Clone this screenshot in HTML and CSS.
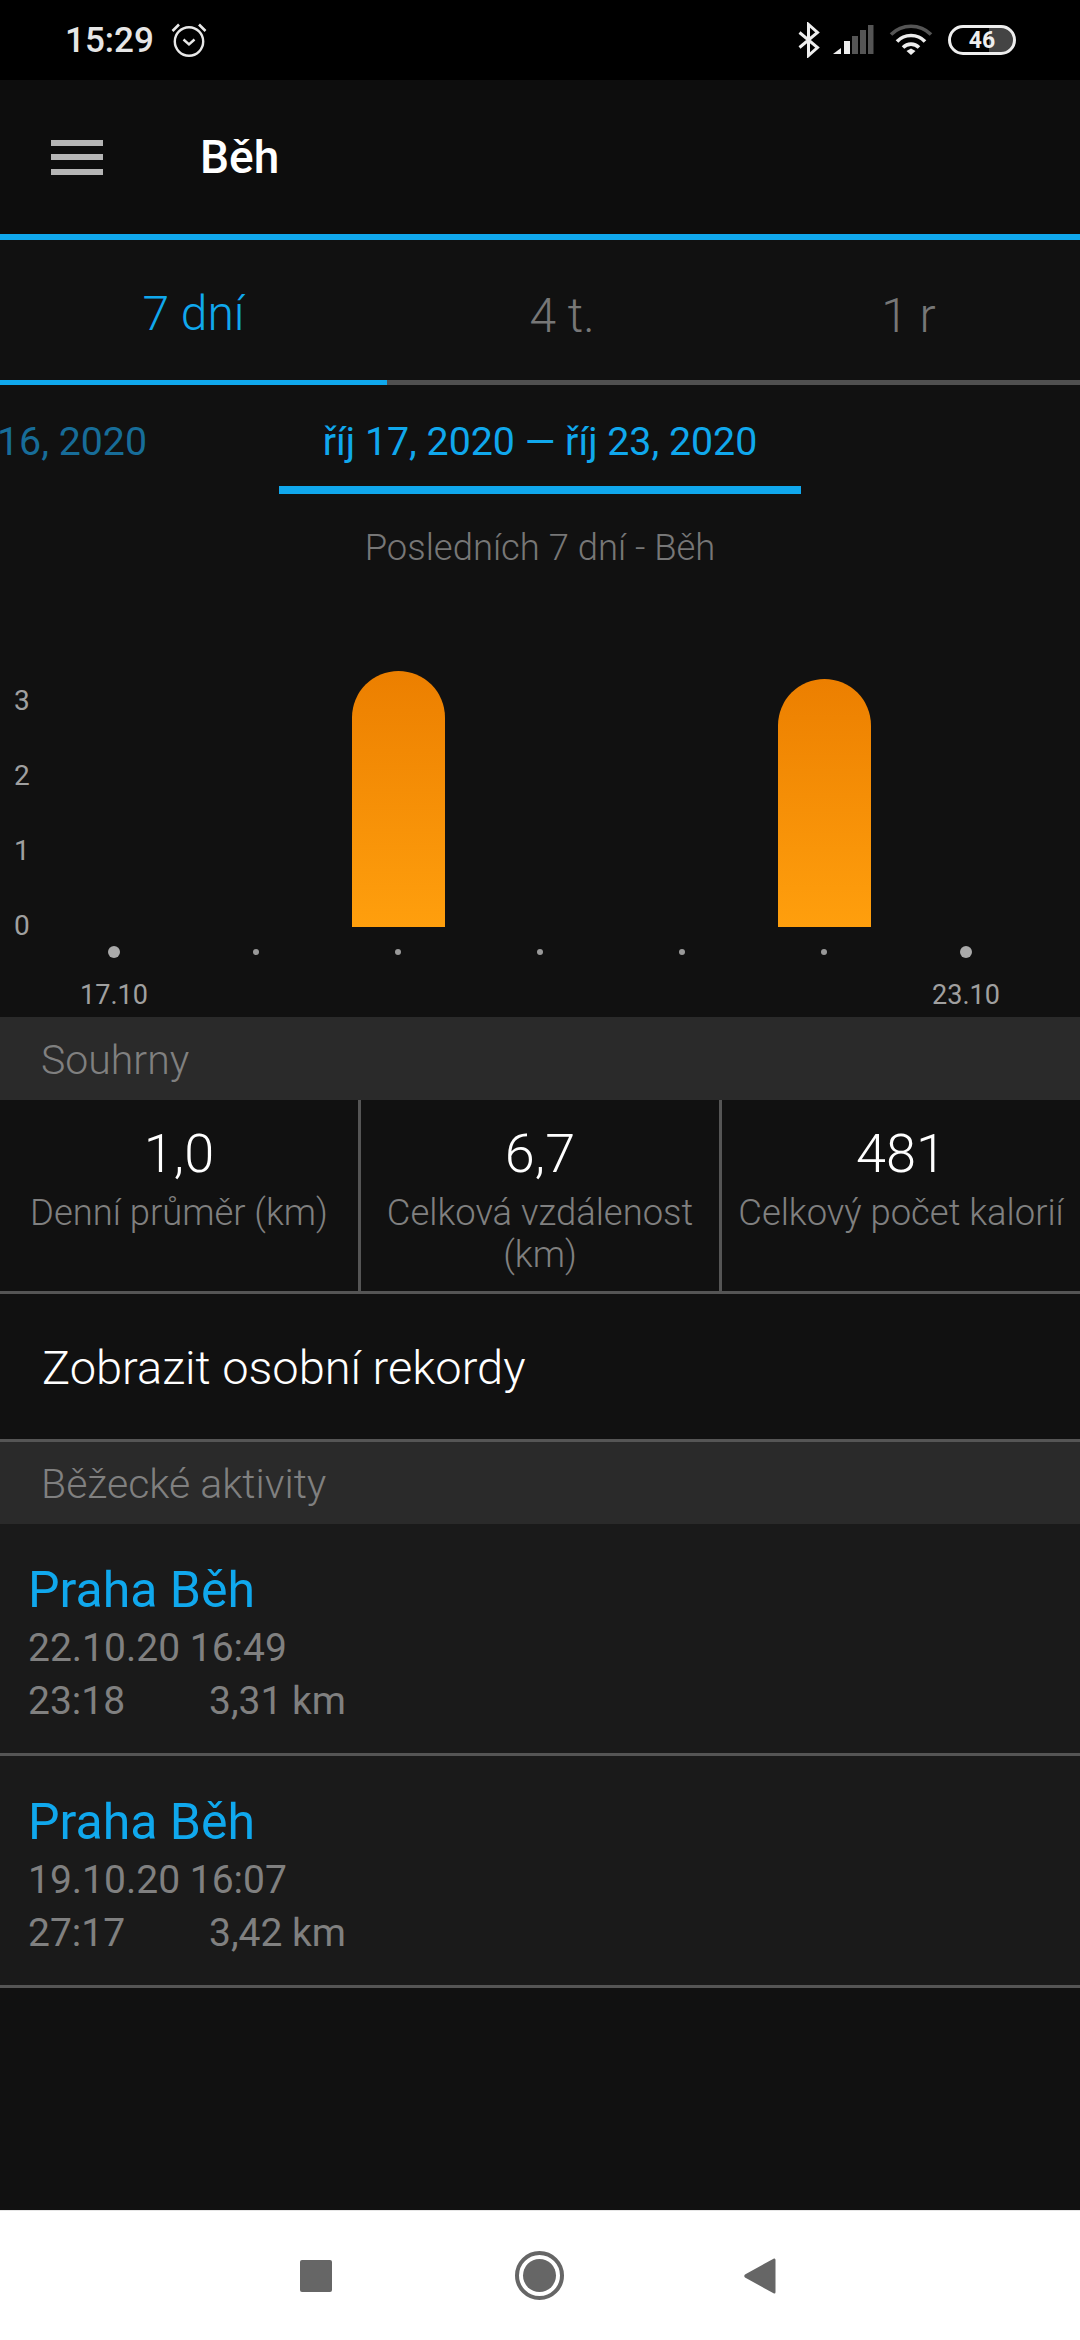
FILE: index.html
```html
<!DOCTYPE html>
<html lang="cs">
<head>
<meta charset="utf-8">
<title>Běh</title>
<link rel="stylesheet" href="styles.css">
</head>
<body>
<div class="phone">
  <header class="status">
    <div class="status-left">
      <span class="clock">15:29</span>
      <svg class="alarm" width="36" height="36" viewBox="0 0 36 36"><circle cx="18" cy="19.5" r="14.2" fill="none" stroke="#e8e8e8" stroke-width="2.4"/><path d="M12.5 17.5l5.5 5 5.5-5" fill="none" stroke="#e8e8e8" stroke-width="2.4"/><path d="M1.5 9L8 2.5M34.5 9L28 2.5" fill="none" stroke="#e8e8e8" stroke-width="2.6"/></svg>
    </div>
    <div class="status-right">
      <svg class="bt" width="22" height="36" viewBox="0 0 22 36"><path d="M1.5 10.5L19.5 25.5 10.5 33.5V2.5L19.5 10.5 1.5 25.5" fill="none" stroke="#eee" stroke-width="3"/></svg>
      <svg class="signal" width="41" height="30" viewBox="0 0 41 30"><path d="M0 29l8-6v6z" fill="#eee"/><rect x="11" y="16" width="6" height="13" fill="#eee"/><rect x="19" y="11" width="6" height="18" fill="#555"/><rect x="27" y="5" width="6" height="24" fill="#555"/><rect x="35" y="0" width="5.500" height="29" fill="#555"/></svg>
      <svg class="wifi" width="44" height="32" viewBox="0 0 44 32"><path d="M2 10.500C13 -0.500 31 -0.500 42 10.500" fill="none" stroke="#555" stroke-width="3.600"/><path d="M8 17.500C15.500 9.500 28.500 9.500 36 17.500" fill="none" stroke="#eee" stroke-width="3.600"/><path d="M14 23.500C18.500 19 25.500 19 30 23.500" fill="none" stroke="#eee" stroke-width="3.600"/><path d="M17.500 27L22 24.500 26.500 27 22 31z" fill="#eee"/></svg>
      <div class="battery"><span class="battery-level">46</span></div>
    </div>
  </header>

  <div class="appbar">
    <div class="menu"><i></i><i></i><i></i></div>
    <h1 class="title">Běh</h1>
  </div>

  <nav class="tabs">
    <div class="tab tab-week">7 dní</div>
    <div class="tab tab-month">4 t.</div>
    <div class="tab tab-year">1 r</div>
  </nav>

  <div class="dates">
    <span class="date-prev">16, 2020</span>
    <span class="date-current">říj 17, 2020 — říj 23, 2020</span>
  </div>

  <div class="chart-title">Posledních 7 dní - Běh</div>

  <section class="chart">
    <div class="axis"><span>3</span><span>2</span><span>1</span><span>0</span></div>
    <div class="day"><div class="plot"></div><div class="dot big"></div><div class="tick">17.10</div></div>
    <div class="day"><div class="plot"></div><div class="dot"></div><div class="tick"></div></div>
    <div class="day"><div class="plot"><div class="bar" style="height:256px"></div></div><div class="dot"></div><div class="tick"></div></div>
    <div class="day"><div class="plot"></div><div class="dot"></div><div class="tick"></div></div>
    <div class="day"><div class="plot"></div><div class="dot"></div><div class="tick"></div></div>
    <div class="day"><div class="plot"><div class="bar" style="height:248px"></div></div><div class="dot"></div><div class="tick"></div></div>
    <div class="day"><div class="plot"></div><div class="dot big"></div><div class="tick">23.10</div></div>
  </section>

  <div class="band band-first">Souhrny</div>

  <section class="stats">
    <div class="stat"><div class="stat-value">1,0</div><div class="stat-label">Denní průměr (km)</div></div>
    <div class="stat"><div class="stat-value">6,7</div><div class="stat-label">Celková vzdálenost (km)</div></div>
    <div class="stat"><div class="stat-value">481</div><div class="stat-label">Celkový počet kalorií</div></div>
  </section>

  <div class="records">Zobrazit osobní rekordy</div>

  <div class="band">Běžecké aktivity</div>

  <section class="activities">
    <article class="activity">
      <div class="activity-name">Praha Běh</div>
      <div class="activity-date">22.10.20 16:49</div>
      <div class="activity-meta"><span class="activity-time">23:18</span><span>3,31 km</span></div>
    </article>
    <article class="activity">
      <div class="activity-name">Praha Běh</div>
      <div class="activity-date">19.10.20 16:07</div>
      <div class="activity-meta"><span class="activity-time">27:17</span><span>3,42 km</span></div>
    </article>
  </section>

  <footer class="navbar">
    <div class="nav-square"></div>
    <div class="nav-home"><div class="nav-home-core"></div></div>
    <svg class="nav-back" width="32" height="36" viewBox="0 0 32 36"><path d="M30 0.500Q31.500 0 31.500 2V34Q31.500 36 30 35.500L1 19.500Q-0.500 18 1 16.500z" fill="#666"/></svg>
  </footer>
</div>
</body>
</html>
```
FILE: styles.css
```css
* { box-sizing: border-box; }
html, body { margin: 0; padding: 0; }
body { background: #111; font-family: Roboto, "Noto Sans", sans-serif; }
.phone { width: 1080px; height: 2340px; display: flex; flex-direction: column; background: #111; overflow: hidden; }

/* status bar */
.status { height: 80px; background: #000; display: flex; align-items: center; justify-content: space-between; padding: 0 64px 0 65px; }
.status-left { display: flex; align-items: center; }
.clock { font-size: 35px; font-weight: 500; color: #e6e6e6; }
.alarm { margin-left: 17px; margin-top: -1px; }
.status-right { display: flex; align-items: center; }
.bt { margin-right: 13px; }
.signal { margin-right: 15px; }
.wifi { margin-right: 15px; }
.battery { width: 68px; height: 30px; border: 3px solid #eee; border-radius: 15px; background: linear-gradient(90deg, #000 62%, #444 62%); display: flex; align-items: center; justify-content: center; }
.battery-level { font-size: 23px; font-weight: 700; color: #eee; line-height: 1; }

/* app bar */
.appbar { height: 160px; background: #0d0d0d; border-bottom: 6px solid #10a8ed; display: flex; align-items: center; padding-left: 51px; }
.menu { width: 52px; height: 35px; display: flex; flex-direction: column; justify-content: space-between; }
.menu i { display: block; height: 6px; background: #b5b5b5; }
.title { margin: 0 0 0 97px; font-size: 46px; font-weight: 500; color: #fff; }

/* tabs */
.tabs { height: 145px; display: flex; border-bottom: 5px solid #505050; background: #111; }
.tab { font-size: 48px; font-weight: 300; color: #777; display: flex; align-items: center; justify-content: center; margin-bottom: -5px; padding-top: 5px; }
.tab-week { width: 387px; color: #10a8ed; border-bottom: 5px solid #10a8ed; padding-top: 7px; }
.tab-month { width: 350px; }
.tab-year { width: 343px; }

/* date strip */
.dates { height: 109px; position: relative; display: flex; justify-content: center; }
.date-prev { position: absolute; right: 933px; top: 35px; font-size: 39.300px; color: #176d99; white-space: nowrap; line-height: 44px; }
.date-current { width: 522px; text-align: center; font-size: 39.300px; color: #10a8ed; border-bottom: 8px solid #10a8ed; padding-top: 35px; line-height: 44px; white-space: nowrap; }

.chart-title { height: 108px; padding-top: 33px; text-align: center; font-size: 36.400px; font-weight: 300; color: #777; line-height: 42px; }

/* chart */
.chart { height: 415px; position: relative; display: grid; grid-template-columns: repeat(7, 142px); padding-left: 43px; }
.axis { position: absolute; left: 14px; top: 61px; display: flex; flex-direction: column; font-size: 28px; font-weight: 400; color: #a0a0a0; }
.axis span { height: 75px; line-height: 75px; }
.day { display: flex; flex-direction: column; align-items: center; }
.plot { height: 325px; display: flex; align-items: flex-end; }
.bar { width: 93px; border-radius: 46.500px 46.500px 0 0; background: linear-gradient(180deg, #ec7f00, #ff9f0d); }
.dot { height: 50px; width: 100%; position: relative; }
.dot::after { content: ""; position: absolute; left: 50%; top: 22px; width: 6px; height: 6px; margin-left: -3px; border-radius: 50%; background: #999; }
.dot.big::after { width: 12px; height: 12px; margin-left: -6px; top: 19px; background: #aaa; }
.tick { height: 40px; font-size: 27px; color: #a0a0a0; line-height: 36px; white-space: nowrap; }

/* section bands */
.band { height: 82px; background: #2a2a2a; color: #808080; font-size: 41px; font-weight: 300; display: flex; align-items: center; padding: 2px 0 0 41px; }
.band-first { height: 83px; }

/* stats */
.stats { height: 194px; display: grid; grid-template-columns: 361px 361px 358px; border-bottom: 3px solid #555; }
.stat { text-align: center; padding: 22px 8px 0; border-right: 3px solid #555; }
.stat:last-child { border-right: 0; padding: 22px 0 0; }
.stat-value { font-size: 54px; font-weight: 300; color: #fff; line-height: 64px; margin-bottom: 6px; }
.stat-label { font-size: 36.400px; font-weight: 300; color: #808080; line-height: 42px; }

.records { height: 148px; border-bottom: 3px solid #555; display: flex; align-items: center; padding: 2px 0 0 42px; font-size: 47px; font-weight: 300; color: #fff; }

/* activities */
.activities { flex: 1; }
.activity { height: 232px; padding: 30px 0 0 28px; background: #1a1a1a; border-bottom: 3px solid #555; }
.activity-name { font-size: 50px; color: #10a8ed; line-height: 72px; }
.activity-date, .activity-meta { font-size: 39px; color: #808080; line-height: 53px; }
.activity-date { margin-top: -4px; }
.activity-meta { display: flex; }
.activity-time { width: 181px; }

/* navigation bar */
.navbar { height: 130px; background: #fff; border-top: 1px solid #e6e6e6; display: flex; align-items: center; position: relative; padding-left: 300px; }
.nav-square { width: 32px; height: 32px; border-radius: 2px; background: #666; }
.nav-home { width: 49px; height: 49px; margin-left: 183px; border-radius: 50%; border: 4px solid #666; display: flex; align-items: center; justify-content: center; }
.nav-home-core { width: 33px; height: 33px; border-radius: 50%; background: #666; }
.nav-back { margin-left: 180px; }
```
